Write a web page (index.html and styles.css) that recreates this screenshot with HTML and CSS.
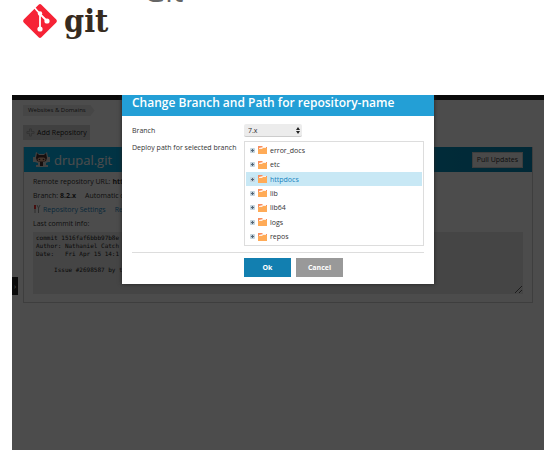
FILE: index.html
```html
<!DOCTYPE html>
<html lang="en">
<head>
    <meta charset="UTF-8">
    <meta name="viewport" content="width=device-width, initial-scale=1.0">
    <title>Git</title>
    <link rel="stylesheet" href="styles.css">
</head>
<body>
    <header class="intro">
        <div class="logo">
            <svg class="logo-mark" viewBox="0 0 36 36" aria-hidden="true">
                <rect x="5.5" y="5.5" width="25" height="25" rx="2" fill="#f62336" transform="rotate(45 18 18)"/>
                <path d="M12 4l6 7v15M18 11l7 7" fill="none" stroke="#fff" stroke-width="1.8"/>
                <circle cx="18" cy="10.500" r="2.200" fill="#fff"/>
                <circle cx="18" cy="26" r="2.600" fill="#fff"/>
                <circle cx="25" cy="18" r="2.600" fill="#fff"/>
            </svg>
            <span class="logo-text">git</span>
        </div>
        <h1 class="title">Git</h1>
    </header>

    <main class="screen">
        <div class="page">
            <div class="topbar"></div>
            <a class="crumb" href="#">Websites &amp; Domains</a>
            <button class="add-button">
                <svg class="plus" viewBox="0 0 10 10" aria-hidden="true">
                    <path d="M4 1h2v3h3v2H6v3H4V6H1V4h3z" fill="none" stroke="#999" stroke-width=".8"/>
                </svg>
                Add Repository
            </button>

            <section class="repo">
                <div class="repo-header">
                    <svg class="mascot" viewBox="0 0 17 16" aria-hidden="true">
                        <path d="M3 0l3 2h5l3-2 1 5h2v5h-2l-2 1v2h2v2H3v-2h2v-2l-3-1H0V5h2z" fill="#ddd"/>
                        <path d="M4 1l2 2h5l2-2 1 5-1 3-3 1v4H7v-4L4 9 3 6z" fill="#4a3030"/>
                        <rect x="4.500" y="5.500" width="8" height="4" rx="2" fill="#e8b090"/>
                        <circle cx="6.500" cy="7.500" r=".8" fill="#322"/>
                        <circle cx="10.500" cy="7.500" r=".8" fill="#322"/>
                    </svg>
                    <h2 class="repo-name">drupal.git</h2>
                    <button class="pull-button">Pull Updates</button>
                </div>
                <div class="repo-body">
                    <p>Remote repository URL: <b>http</b></p>
                    <p>Branch: <b>8.2.x</b> <span class="next">Automatic deployment</span></p>
                    <p>
                        <svg class="tools" viewBox="0 0 8 8" aria-hidden="true">
                            <path d="M1 0h2v4H1z" fill="#e33"/>
                            <path d="M2 4v4M4 0l1.500 3L7 0M5.500 3v5" fill="none" stroke="#999"/>
                        </svg>
                        <a href="#">Repository Settings</a>
                        <a class="next" href="#">Remove</a>
                    </p>
                    <p><label for="commit">Last commit info:</label></p>
                    <textarea class="commit" id="commit" rows="5" readonly>commit 1516faf6bbb97b8e
Author: Nathaniel Catch
Date:   Fri Apr 15 14:1

     Issue #2698587 by t</textarea>
                </div>
            </section>
            <button class="side-tab" aria-label="Open sidebar">›</button>
        </div>

        <div class="overlay">
            <form class="dialog" role="dialog" aria-labelledby="dialog-title">
                <h2 class="dialog-title" id="dialog-title">Change Branch and Path for repository-name</h2>
                <div class="fields">
                    <label class="label" for="branch">Branch</label>
                    <div class="select-wrap">
                        <select class="select" id="branch">
                            <option>7.x</option>
                        </select>
                        <svg class="arrows" viewBox="0 0 4 7" aria-hidden="true">
                            <path d="M0 3l2-3 2 3zM0 4h4L2 7z" fill="#222"/>
                        </svg>
                    </div>
                    <span class="label" id="path-label">Deploy path for selected branch</span>
                    <ul class="tree" role="tree" aria-labelledby="path-label">
                        <li class="node" role="treeitem"><svg class="expand" viewBox="0 0 5 5"><use href="#expand"/></svg><svg class="folder" viewBox="0 0 9 8"><use href="#folder"/></svg>error_docs</li>
                        <li class="node" role="treeitem"><svg class="expand" viewBox="0 0 5 5"><use href="#expand"/></svg><svg class="folder" viewBox="0 0 9 8"><use href="#folder"/></svg>etc</li>
                        <li class="node selected" role="treeitem" aria-selected="true"><svg class="expand" viewBox="0 0 5 5"><use href="#expand"/></svg><svg class="folder" viewBox="0 0 9 8"><use href="#folder"/></svg>httpdocs</li>
                        <li class="node" role="treeitem"><svg class="expand" viewBox="0 0 5 5"><use href="#expand"/></svg><svg class="folder" viewBox="0 0 9 8"><use href="#folder"/></svg>lib</li>
                        <li class="node" role="treeitem"><svg class="expand" viewBox="0 0 5 5"><use href="#expand"/></svg><svg class="folder" viewBox="0 0 9 8"><use href="#folder"/></svg>lib64</li>
                        <li class="node" role="treeitem"><svg class="expand" viewBox="0 0 5 5"><use href="#expand"/></svg><svg class="folder" viewBox="0 0 9 8"><use href="#folder"/></svg>logs</li>
                        <li class="node" role="treeitem"><svg class="expand" viewBox="0 0 5 5"><use href="#expand"/></svg><svg class="folder" viewBox="0 0 9 8"><use href="#folder"/></svg>repos</li>
                    </ul>
                </div>
                <div class="actions">
                    <button class="button ok" type="button">Ok</button>
                    <button class="button cancel" type="button">Cancel</button>
                </div>
            </form>
        </div>
    </main>

    <!-- shared tree icons -->
    <svg class="symbols" aria-hidden="true">
        <symbol id="expand" viewBox="0 0 5 5">
            <rect width="5" height="5" rx="1" fill="#c3d3dc"/>
            <path d="M2 1h1v1h1v1H3v1H2V3H1V2h1z" fill="#567"/>
        </symbol>
        <symbol id="folder" viewBox="0 0 9 8">
            <path d="M0 0h4l1 1h4v2H0z" fill="#f98d5e"/>
            <path d="M1 2l4-1h3v2H1z" fill="#fff0e4"/>
            <path d="M0 3h4l1-1h4v6H0z" fill="#ffab57"/>
        </symbol>
    </svg>
</body>
</html>
```
FILE: styles.css
```css
* {
    box-sizing: border-box;
}

body {
    margin: 0;
    height: 100vh;
    padding: 0 10px 4px 12px;
    display: flex;
    flex-direction: column;
    background: #fff;
    color: #333;
    font-family: "Open Sans", sans-serif;
    font-size: 7px;
}

button, select, textarea {
    font: inherit;
    margin: 0;
}

a {
    color: #1b86c2;
    text-decoration: none;
}

/* logo and page title */
.intro {
    display: flex;
    align-items: flex-start;
    height: 95px;
    padding-left: 10px;
}

.logo {
    display: flex;
    align-items: center;
    gap: 6px;
    padding-top: 3px;
}

.logo-mark {
    width: 36px;
    height: 36px;
}

.logo-text {
    color: #362b20;
    font: bold 32px/36px "DejaVu Serif Condensed", "DejaVu Serif", serif;
}

.title {
    margin: -31px 0 0 35px;
    color: #666;
    font: 30px/44px "Open Sans", sans-serif;
}

/* dimmed control panel */
.screen {
    position: relative;
    flex: 1;
    overflow: hidden;
}

.page {
    height: 100%;
}

.topbar {
    height: 5px;
    margin-bottom: 5px;
    background: #222;
}

.crumb {
    display: table;
    margin-left: 11px;
    padding: 0 9px 0 5px;
    background: #ececec;
    color: #333;
    font-size: 6px;
    line-height: 11px;
    clip-path: polygon(0 0, 94% 0, 100% 50%, 94% 100%, 0 100%);
}

.add-button {
    display: flex;
    align-items: center;
    gap: 2px;
    height: 15px;
    margin: 9px 0 7px 11px;
    padding: 0 3px;
    border: 0;
    background: #d8d8d8;
    color: #222;
}

.plus {
    width: 9px;
    height: 9px;
}

.repo {
    margin: 0 11px;
    border: 1px solid #d0d0d0;
    border-top: 0;
}

.repo-header {
    display: flex;
    align-items: center;
    gap: 4px;
    height: 25px;
    padding: 0 9px;
    background: linear-gradient(to right, #06b4ee, #0488b4);
}

.mascot {
    width: 17px;
    height: 16px;
}

.repo-name {
    flex: 1;
    margin: 0;
    color: #fff;
    font-size: 13px;
    font-weight: 400;
}

.pull-button {
    height: 16px;
    padding: 0 4px;
    border: 1px solid #ccc;
    background: #f4f4f4;
    color: #333;
}

.repo-body {
    padding: 2px 9px 8px;
}

.repo-body p {
    display: flex;
    align-items: center;
    gap: 2px;
    height: 14px;
    margin: 0;
}

.next {
    margin-left: 7px;
}

.tools {
    width: 8px;
    height: 8px;
}

.commit {
    display: block;
    width: 100%;
    height: 62px;
    margin-top: 2px;
    padding: 2px 3px;
    border: 0;
    background: #e6e6e6;
    color: #222;
    font: 6px/8px "DejaVu Sans Mono", monospace;
}

.side-tab {
    position: absolute;
    left: 0;
    top: 182px;
    width: 6px;
    height: 18px;
    padding: 0;
    border: 0;
    background: #222;
    color: #fff;
}

/* dialog */
.overlay {
    position: absolute;
    inset: 0;
    padding: 0 110px;
    background: rgba(0, 0, 0, 0.7);
}

.dialog {
    background: #fff;
    box-shadow: 0 0 4px #222;
}

.dialog-title {
    height: 21px;
    margin: 0;
    padding: 0 10px;
    background: #239fd6;
    color: #fff;
    font-size: 12px;
    font-weight: 600;
    line-height: 16px;
    white-space: nowrap;
}

.fields {
    display: grid;
    grid-template-columns: 112px 1fr;
    row-gap: 4px;
    margin: 8px 10px 0;
    padding-bottom: 6px;
    border-bottom: 1px solid #ddd;
}

.label {
    line-height: 13px;
}

.select-wrap {
    position: relative;
    width: 58px;
    height: 13px;
}

.select {
    display: block;
    width: 100%;
    height: 100%;
    padding: 0 4px;
    border: 0;
    border-bottom: 1px solid #ccc;
    border-radius: 2px;
    background: #ececec;
    color: #333;
    appearance: none;
}

.arrows {
    position: absolute;
    right: 2px;
    top: 3px;
    width: 4px;
    height: 7px;
}

.tree {
    display: flex;
    flex-direction: column;
    height: 105px;
    margin: 0;
    padding: 1px;
    border: 1px solid #ddd;
    list-style: none;
}

.node {
    display: flex;
    flex: 1;
    align-items: center;
    padding-left: 4px;
}

.selected {
    background: #c8e8f5;
    color: #1583c0;
}

.expand {
    width: 5px;
    height: 5px;
    margin-right: 3px;
}

.folder {
    width: 9px;
    height: 8px;
    margin-right: 3px;
}

.actions {
    display: flex;
    gap: 5px;
    padding: 5px 10px 7px 122px;
}

.button {
    width: 47px;
    height: 19px;
    padding: 0;
    border: 0;
    color: #fff;
    font-weight: 700;
}

.ok {
    background: #127fb0;
}

.cancel {
    background: #999;
}

.symbols {
    position: absolute;
    width: 0;
    height: 0;
}
```
